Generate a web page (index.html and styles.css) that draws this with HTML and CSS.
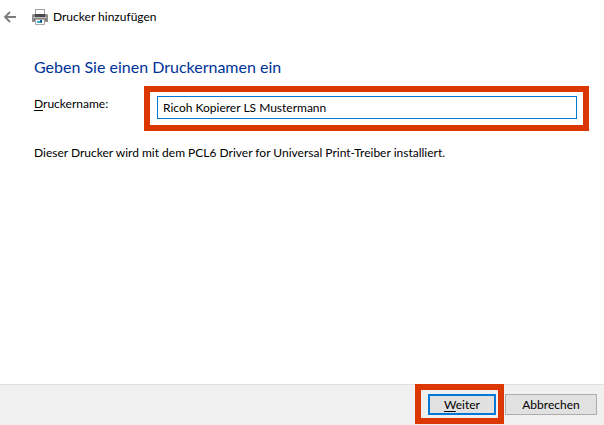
FILE: index.html
```html
<!DOCTYPE html>
<html lang="de">
<head>
<meta charset="utf-8">
<meta name="viewport" content="width=device-width, initial-scale=1">
<title>Drucker hinzufügen</title>
<link rel="stylesheet" href="styles.css">
</head>
<body>
<form class="wizard">
  <header class="titlebar">
    <button class="back" type="button" aria-label="Zurück">
      <svg width="12" height="12" viewBox="0 0 12 12" fill="none" stroke="#7c7c7c" stroke-width="1.8"><path d="M12 6H1.5M6 1 1 6l5 5"/></svg>
    </button>
    <svg class="printer" width="16" height="16" viewBox="0 0 16 16" aria-hidden="true">
      <path fill="#fff" stroke="#9b9b9b" d="M3.5 6V.5h9V6"/>
      <path fill="#8b8b8b" d="M1 5h2v2h10V5h2l1 1v7H0V6z"/>
      <path fill="#4a4a4a" d="M3 5h10v3H3z"/>
      <path fill="#b9b9b9" d="M1 8h14v1H1z"/>
      <path fill="#666" d="M2 10h12v1H2z"/>
      <path fill="#fff" stroke="#a5a5a5" d="M3.5 10.5h9v5h-9z"/>
      <path fill="#37a5e8" d="M5 12h3v2H5z"/>
      <path fill="#1555a5" d="M8 11h2v3H8z"/>
      <path fill="#45b575" d="M7 13h2v1H7z"/>
    </svg>
    <span>Drucker hinzufügen</span>
  </header>
  <main class="content">
    <h1>Geben Sie einen Druckernamen ein</h1>
    <div class="field">
      <label for="name"><u>D</u>ruckername:</label>
      <div class="highlight highlight-field">
        <input id="name" type="text" value="Ricoh Kopierer LS Mustermann">
      </div>
    </div>
    <p>Dieser Drucker wird mit dem PCL6 Driver for Universal Print-Treiber installiert.</p>
  </main>
  <footer class="actions">
    <div class="highlight highlight-button">
      <button class="btn primary" type="submit"><u>W</u>eiter</button>
    </div>
    <button class="btn cancel" type="button">Abbrechen</button>
  </footer>
</form>
</body>
</html>
```
FILE: styles.css
```css
* {
  box-sizing: border-box;
}

body {
  margin: 0;
  background: #fff;
  color: #000;
  font: 12px/16px "Segoe UI", Lato, "Open Sans", sans-serif;
}

button,
input {
  font: inherit;
  color: inherit;
}

u {
  text-underline-offset: 2px;
}

.wizard {
  display: flex;
  flex-direction: column;
  min-height: 100vh;
}

.titlebar {
  display: flex;
  align-items: center;
  height: 34px;
  padding-left: 4px;
}

.back {
  display: flex;
  margin-right: 16px;
  padding: 0;
  border: 0;
  background: none;
}

.printer {
  margin-right: 5px;
}

.content {
  flex: 1;
  padding: 22px 15px 0 34px;
}

h1 {
  margin: 0 0 8px;
  color: #003399;
  font-size: 16px;
  line-height: 22px;
  font-weight: 400;
}

.field {
  display: flex;
  align-items: flex-start;
  margin-bottom: 14px;
}

.field label {
  width: 110px;
  padding-top: 10px;
}

.highlight {
  border: 6px solid #dc3700;
}

.highlight-field {
  flex: 1;
  padding: 4px 6px 6px 7px;
}

.field input {
  display: block;
  width: 100%;
  height: 23px;
  padding: 0 5px;
  border: 1px solid #0078d7;
  border-radius: 0;
  outline: 0;
  background: #fff;
}

p {
  margin: 0;
}

.actions {
  display: flex;
  justify-content: flex-end;
  align-items: flex-start;
  gap: 1px;
  height: 41px;
  padding-right: 7px;
  background: linear-gradient(#dfdfdf 1px, #f0f0f0 1px);
}

.highlight-button {
  padding: 4px 2px 3px 7px;
}

.btn {
  display: block;
  height: 21px;
  padding: 0;
  border: 1px solid #adadad;
  border-radius: 0;
  background: #e1e1e1;
  line-height: 16px;
}

.primary {
  width: 68px;
  border: 2px solid #0078d7;
}

.cancel {
  width: 92px;
  margin-top: 10px;
}
```
